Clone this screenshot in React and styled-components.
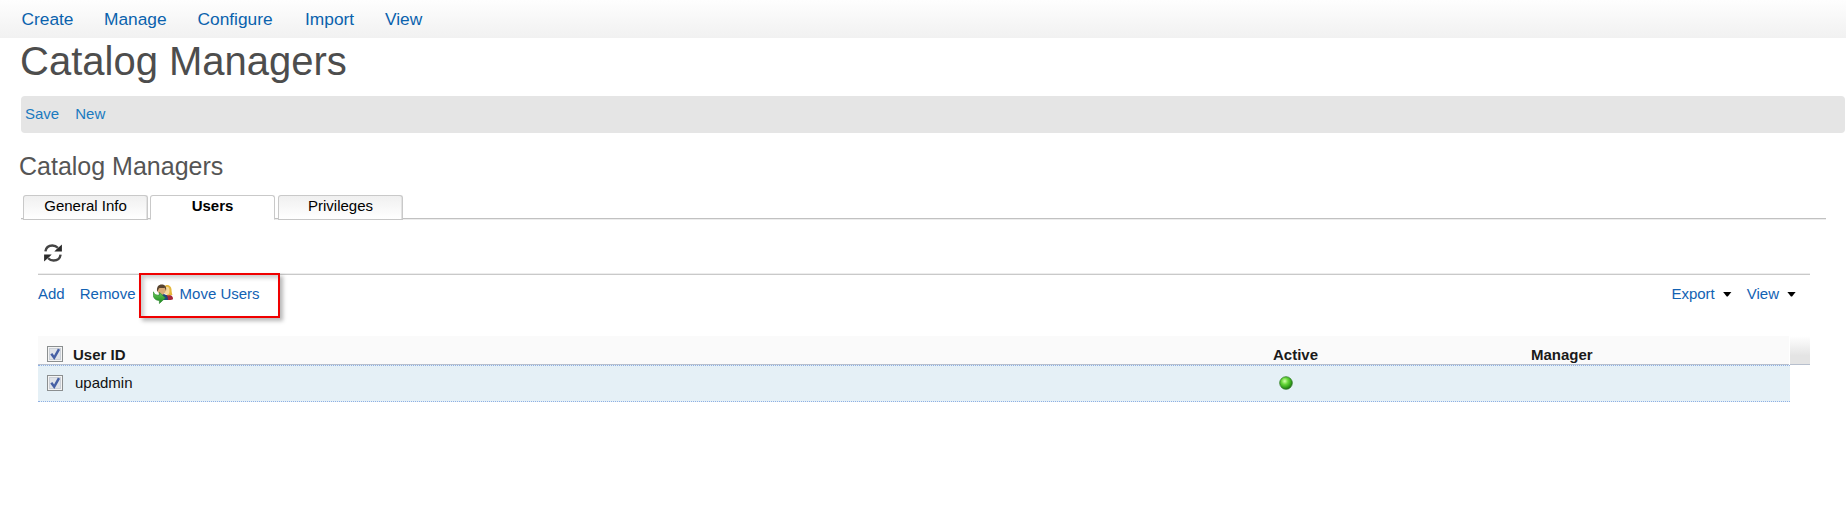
import React from "react";
import styled, { createGlobalStyle } from "styled-components";

const GlobalStyle = createGlobalStyle`
  * { box-sizing: border-box; }
  body {
    margin: 0;
    background: #fff;
    color: #111;
    font: 15px/18px "Liberation Sans", Arial, sans-serif;
    overflow: hidden;
  }
`;

const Page = styled.div`
  height: 509px;
  overflow: hidden;
`;

const NavBar = styled.nav`
  display: flex;
  align-items: flex-start;
  height: 38px;
  padding: 9px 0 0 21.5px;
  background: linear-gradient(#fefefe, #f1f1f1);
`;

const NavItem = styled.a`
  width: ${(p) => p.$width}px;
  color: #0a62ad;
  font-size: 17.33px;
  line-height: 20px;
`;

const Title = styled.h1`
  height: 58px;
  margin: 0;
  padding-left: 20px;
  color: #4d4d4d;
  font-size: 40px;
  line-height: 46px;
  font-weight: 400;
`;

const ActionBar = styled.div`
  display: flex;
  gap: 16px;
  height: 37px;
  margin: 0 1px 0 21px;
  padding: 9px 4px;
  border-radius: 4px;
  background: #e5e5e5;
`;

const Link = styled.a`
  color: ${(p) => (p.$bright ? "#1a7abf" : "#1262b3")};
  white-space: nowrap;
`;

const Subtitle = styled.h2`
  height: 62px;
  margin: 0;
  padding: 19px 0 0 19px;
  color: #555;
  font-size: 25px;
  line-height: 28px;
  font-weight: 400;
`;

const TabStrip = styled.div`
  display: flex;
  gap: 2px;
  height: 24px;
  margin: 0 20px 0 21px;
  padding-left: 2px;
  border-bottom: 1px solid #c1c1c1;
  box-shadow: 0 1px #ededed;
`;

const Tab = styled.div`
  width: 125px;
  height: 25px;
  padding-top: 1px;
  border: 1px solid #c9c9c9;
  border-bottom-color: ${(p) => (p.$active ? "#fff" : "#c6c6c6")};
  border-radius: 3px 3px 0 0;
  box-shadow: ${(p) => (p.$active ? "0 1px #fff" : "inset -1px 0 #e2e2e2")};
  background: ${(p) => (p.$active ? "#fff" : "linear-gradient(#f0f0f0, #fff)")};
  color: #000;
  font-weight: ${(p) => (p.$active ? 700 : 400)};
  text-align: center;
  &:last-child { margin-left: 1px; }
`;

const Panel = styled.section`
  margin: 0 36px 0 38px;
`;

const RefreshRow = styled.div`
  height: 56px;
  padding: 25px 0 0 6px;
  border-bottom: 1px solid #c9c9c9;
  box-shadow: inset 0 -1px #ededed;
  svg { display: block; }
`;

const TableTools = styled.div`
  display: flex;
  align-items: flex-start;
  height: 61px;
`;

const ToolLink = styled(Link)`
  margin: 10px 15px 0 0;
`;

const Highlight = styled.div`
  display: flex;
  gap: 7px;
  width: 141px;
  height: 45px;
  margin: -2px 0 0 -12px;
  padding: 9px 0 0 12px;
  border: 2px solid #f00000;
  box-shadow: 3px 3px 4px rgba(0, 0, 0, 0.28), inset 3px 3px 4px rgba(0, 0, 0, 0.2);
  ${Link} { padding-top: 1px; }
`;

const MenuGroup = styled.div`
  display: flex;
  gap: 15px;
  margin: 10px 14px 0 auto;
`;

const Menu = styled.div`
  display: flex;
  align-items: center;
  gap: 8px;
`;

const Caret = styled.span`
  width: 9px;
  height: 5px;
  background: #000;
  clip-path: polygon(0 0, 100% 0, 56% 100%, 44% 100%);
`;

const HeaderLine = styled.div`
  display: flex;
  gap: 1px;
  height: 29px;
`;

const columns = `
  display: grid;
  grid-template-columns: 35px 1200px 258px 1fr;
`;

const HeaderRow = styled.div`
  ${columns}
  width: 1752px;
  border-bottom: 1px solid #b7bfcd;
  background: #fafafa;
  color: #1a1a1a;
  font-weight: 700;
`;

const ScrollCorner = styled.div`
  width: 20px;
  border-bottom: 1px solid #b7bfcd;
  background: linear-gradient(#fff, #e4e4e4 70%);
`;

const DataRow = styled.div`
  ${columns}
  width: 1752px;
  height: 37px;
  border-top: 1px dotted #8fb0e4;
  border-bottom: 1px dotted #8fb0e4;
  background: #e5f0f6;
`;

const Cell = styled.div`
  padding: ${(p) => p.$top}px 0 0 ${(p) => p.$left || 0}px;
  svg { display: block; }
`;

function RefreshIcon() {
  return (
    <svg width="18" height="18" viewBox="0 0 18 18">
      <g fill="none" stroke="#444" strokeWidth="2.4">
        <path d="M1.400 7.400C2 3.500 4.700 1.500 8.400 1.500c2.200 0 4 .8 5.400 2.300" />
        <path d="M16.600 10.600c-.6 3.900-3.300 5.900-7 5.900-2.200 0-4-.8-5.400-2.300" />
      </g>
      <path fill="#2b2b2b" d="M17.900.6v7H10.300l3-3.200zM.1 17.400v-7h7.600l-3 3.200z" />
    </svg>
  );
}

function MoveUsersIcon() {
  return (
    <svg width="20" height="20" viewBox="0 0 20 20">
      <defs>
        <linearGradient id="arrow" x2="0" y2="1">
          <stop stopColor="#6fce5c" />
          <stop offset="1" stopColor="#15851a" />
        </linearGradient>
      </defs>
      <path d="M12 16V11h5c2 .6 3 1.800 3 4.200-2 .8-5 1-8 .8z" fill="#a5263c" />
      <path d="M11 3c2.500-3.800 7.200-1.700 7.500 2.300.1 2.400.3 4 1 5.700l-5 .6z" fill="#e6b83c" />
      <ellipse cx="14" cy="6.800" rx="2.500" ry="4" fill="#f5d79b" />
      <path d="M4 16c0-4.500 2-6 5-6 3.800 0 6 1.300 6 6z" fill="#1f4680" />
      <ellipse cx="8.600" cy="6.200" rx="4" ry="4.800" fill="#d9ab77" />
      <path d="M4.200 8C3.200 2.800 5.500.4 8.800.4s5 2.400 4.200 6.600L11.700 3.700C9.500 4.500 7.500 3.500 6 4.300z" fill="#57432f" />
      <path d="M.4 7.800c.8 2.800 2.600 3.500 6 3.300V8.300l6 5.600-6 5.600v-3C2 16.600-.7 13.200.4 7.800z" fill="url(#arrow)" stroke="#29832a" strokeWidth=".6" />
    </svg>
  );
}

function CheckIcon() {
  return (
    <svg width="16" height="16" viewBox="0 0 16 16">
      <rect x=".5" y=".5" width="15" height="15" fill="#f4f4f4" stroke="#8b8f90" />
      <rect x="2.500" y="2.500" width="11" height="11" fill="#dfe3e9" stroke="#cbd0d7" />
      <path d="M4.300 7.800l2.900 4 4.800-8.600" fill="none" stroke="#4660a5" strokeWidth="2.500" />
    </svg>
  );
}

function ActiveIcon() {
  return (
    <svg width="14" height="14" viewBox="0 0 14 14">
      <defs>
        <radialGradient id="green" cx=".4" cy=".35" r=".65">
          <stop stopColor="#d4ffad" />
          <stop offset=".4" stopColor="#69d83b" />
          <stop offset=".8" stopColor="#319f19" />
          <stop offset="1" stopColor="#246d15" />
        </radialGradient>
      </defs>
      <circle cx="7" cy="7" r="6.300" fill="url(#green)" stroke="#347d29" strokeWidth=".8" />
    </svg>
  );
}

export default function App() {
  return (
    <Page>
      <GlobalStyle />
      <NavBar>
        <NavItem $width={82.5}>Create</NavItem>
        <NavItem $width={93.5}>Manage</NavItem>
        <NavItem $width={107.5}>Configure</NavItem>
        <NavItem $width={80}>Import</NavItem>
        <NavItem $width={60}>View</NavItem>
      </NavBar>
      <Title>Catalog Managers</Title>
      <ActionBar>
        <Link $bright>Save</Link>
        <Link $bright>New</Link>
      </ActionBar>
      <Subtitle>Catalog Managers</Subtitle>
      <TabStrip>
        <Tab>General Info</Tab>
        <Tab $active>Users</Tab>
        <Tab>Privileges</Tab>
      </TabStrip>
      <Panel>
        <RefreshRow><RefreshIcon /></RefreshRow>
        <TableTools>
          <ToolLink>Add</ToolLink>
          <ToolLink>Remove</ToolLink>
          <Highlight>
            <MoveUsersIcon />
            <Link>Move Users</Link>
          </Highlight>
          <MenuGroup>
            <Menu><Link>Export</Link><Caret /></Menu>
            <Menu><Link>View</Link><Caret /></Menu>
          </MenuGroup>
        </TableTools>
        <HeaderLine>
          <HeaderRow>
            <Cell $top={10} $left={9}><CheckIcon /></Cell>
            <Cell $top={10}>User ID</Cell>
            <Cell $top={10}>Active</Cell>
            <Cell $top={10}>Manager</Cell>
          </HeaderRow>
          <ScrollCorner />
        </HeaderLine>
        <DataRow>
          <Cell $top={9} $left={9}><CheckIcon /></Cell>
          <Cell $top={8} $left={2}>upadmin</Cell>
          <Cell $top={10} $left={6}><ActiveIcon /></Cell>
          <Cell $top={8} />
        </DataRow>
      </Panel>
    </Page>
  );
}
